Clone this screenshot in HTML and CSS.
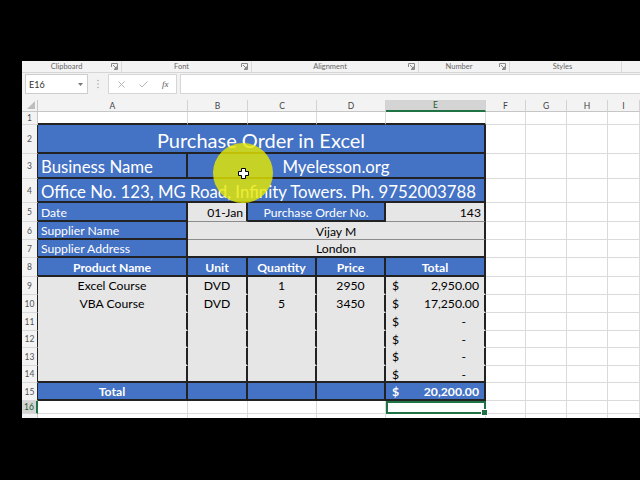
FILE: index.html
```html
<!DOCTYPE html>
<html>
<head>
<meta charset="utf-8">
<link rel="stylesheet" href="styles.css">
</head>
<body>
<div class="screen">
  <div class="ribbon">
    <div class="grp g1"><span class="glabel">Clipboard</span><svg class="launch" width="7" height="7" viewBox="0 0 7 7"><path d="M0.5 4V0.5H6.5V6.5H3" fill="none" stroke="#8a8a8a"/><path d="M2 2L5.5 5.5M5.5 3.5V5.5H3.5" fill="none" stroke="#8a8a8a"/></svg></div>
    <div class="grp g2"><span class="glabel">Font</span><svg class="launch" width="7" height="7" viewBox="0 0 7 7"><path d="M0.5 4V0.5H6.5V6.5H3" fill="none" stroke="#8a8a8a"/><path d="M2 2L5.5 5.5M5.5 3.5V5.5H3.5" fill="none" stroke="#8a8a8a"/></svg></div>
    <div class="grp g3"><span class="glabel">Alignment</span><svg class="launch" width="7" height="7" viewBox="0 0 7 7"><path d="M0.5 4V0.5H6.5V6.5H3" fill="none" stroke="#8a8a8a"/><path d="M2 2L5.5 5.5M5.5 3.5V5.5H3.5" fill="none" stroke="#8a8a8a"/></svg></div>
    <div class="grp g4"><span class="glabel">Number</span><svg class="launch" width="7" height="7" viewBox="0 0 7 7"><path d="M0.5 4V0.5H6.5V6.5H3" fill="none" stroke="#8a8a8a"/><path d="M2 2L5.5 5.5M5.5 3.5V5.5H3.5" fill="none" stroke="#8a8a8a"/></svg></div>
    <div class="grp g5"><span class="glabel">Styles</span></div>
    <div class="grp g6"></div>
  </div>

  <div class="fbar">
    <div class="namebox"><span>E16</span><svg width="5" height="3" viewBox="0 0 5 3"><path d="M0 0H5L2.5 3Z" fill="#777"/></svg></div>
    <div class="dots"><svg width="2" height="10" viewBox="0 0 2 10"><circle cx="1" cy="1.5" r="0.8" fill="#aaa"/><circle cx="1" cy="5" r="0.8" fill="#aaa"/><circle cx="1" cy="8.5" r="0.8" fill="#aaa"/></svg></div>
    <div class="fxbox">
      <svg width="7" height="7" viewBox="0 0 7 7"><path d="M0.5 0.5L6.5 6.5M6.5 0.5L0.5 6.5" stroke="#b5b5b5" stroke-width="1"/></svg>
      <svg width="9" height="7" viewBox="0 0 9 7"><path d="M0.5 3.5L3 6L8.5 0.5" fill="none" stroke="#b5b5b5" stroke-width="1"/></svg>
      <span class="fx">fx</span>
    </div>
    <div class="finput"></div>
  </div>

  <div class="sheet">
    <!-- header row -->
    <div class="c corner"><svg width="8" height="8" viewBox="0 0 8 8"><path d="M8 0V8H0Z" fill="#bdbdbd"/></svg></div>
    <div class="c hd">A</div><div class="c hd">B</div><div class="c hd">C</div><div class="c hd">D</div>
    <div class="c hd on">E</div><div class="c hd">F</div><div class="c hd">G</div><div class="c hd">H</div><div class="c hd">I</div>

    <!-- row 1 -->
    <div class="c rh">1</div>
    <div class="c tb"></div><div class="c tb"></div><div class="c tb"></div><div class="c tb"></div><div class="c tb"></div>
    <div class="c"></div><div class="c"></div><div class="c"></div><div class="c"></div>

    <!-- row 2 -->
    <div class="c rh edge">2</div>
    <div class="c f blue s5 ctr title">Purchase Order in Excel</div>
    <div class="c"></div><div class="c"></div><div class="c"></div><div class="c"></div>

    <!-- row 3 -->
    <div class="c rh edge">3</div>
    <div class="c f blue big">Business Name</div>
    <div class="c f blue s4 ctr big">Myelesson.org</div>
    <div class="c"></div><div class="c"></div><div class="c"></div><div class="c"></div>

    <!-- row 4 -->
    <div class="c rh edge">4</div>
    <div class="c f blue s5 big">Office No. 123, MG Road, Infinity Towers. Ph. 9752003788</div>
    <div class="c"></div><div class="c"></div><div class="c"></div><div class="c"></div>

    <!-- row 5 -->
    <div class="c rh edge">5</div>
    <div class="c f blue">Date</div>
    <div class="c f grey rt lb">01-Jan</div>
    <div class="c f blue s2 ctr">Purchase Order No.</div>
    <div class="c f grey rt lb">143</div>
    <div class="c"></div><div class="c"></div><div class="c"></div><div class="c"></div>

    <!-- row 6 -->
    <div class="c rh edge">6</div>
    <div class="c f blue">Supplier Name</div>
    <div class="c f grey s4 ctr lb">Vijay M</div>
    <div class="c"></div><div class="c"></div><div class="c"></div><div class="c"></div>

    <!-- row 7 -->
    <div class="c rh edge">7</div>
    <div class="c f blue">Supplier Address</div>
    <div class="c f grey s4 ctr">London</div>
    <div class="c"></div><div class="c"></div><div class="c"></div><div class="c"></div>

    <!-- row 8 -->
    <div class="c rh edge">8</div>
    <div class="c f blue ctr b">Product Name</div>
    <div class="c f blue ctr b">Unit</div>
    <div class="c f blue ctr b">Quantity</div>
    <div class="c f blue ctr b">Price</div>
    <div class="c f blue ctr b">Total</div>
    <div class="c"></div><div class="c"></div><div class="c"></div><div class="c"></div>

    <!-- row 9 -->
    <div class="c rh edge">9</div>
    <div class="c f grey nb ctr">Excel Course</div>
    <div class="c f grey nb ctr">DVD</div>
    <div class="c f grey nb ctr">1</div>
    <div class="c f grey nb ctr">2950</div>
    <div class="c f grey nb acc"><span>$</span><span>2,950.00</span></div>
    <div class="c"></div><div class="c"></div><div class="c"></div><div class="c"></div>

    <!-- row 10 -->
    <div class="c rh edge">10</div>
    <div class="c f grey nb ctr">VBA Course</div>
    <div class="c f grey nb ctr">DVD</div>
    <div class="c f grey nb ctr">5</div>
    <div class="c f grey nb ctr">3450</div>
    <div class="c f grey nb acc"><span>$</span><span>17,250.00</span></div>
    <div class="c"></div><div class="c"></div><div class="c"></div><div class="c"></div>

    <!-- row 11 -->
    <div class="c rh edge">11</div>
    <div class="c f grey nb"></div><div class="c f grey nb"></div><div class="c f grey nb"></div><div class="c f grey nb"></div>
    <div class="c f grey nb acc"><span>$</span><span class="dash">-</span></div>
    <div class="c"></div><div class="c"></div><div class="c"></div><div class="c"></div>

    <!-- row 12 -->
    <div class="c rh edge">12</div>
    <div class="c f grey nb"></div><div class="c f grey nb"></div><div class="c f grey nb"></div><div class="c f grey nb"></div>
    <div class="c f grey nb acc"><span>$</span><span class="dash">-</span></div>
    <div class="c"></div><div class="c"></div><div class="c"></div><div class="c"></div>

    <!-- row 13 -->
    <div class="c rh edge">13</div>
    <div class="c f grey nb"></div><div class="c f grey nb"></div><div class="c f grey nb"></div><div class="c f grey nb"></div>
    <div class="c f grey nb acc"><span>$</span><span class="dash">-</span></div>
    <div class="c"></div><div class="c"></div><div class="c"></div><div class="c"></div>

    <!-- row 14 -->
    <div class="c rh edge">14</div>
    <div class="c f grey"></div><div class="c f grey"></div><div class="c f grey"></div><div class="c f grey"></div>
    <div class="c f grey acc"><span>$</span><span class="dash">-</span></div>
    <div class="c"></div><div class="c"></div><div class="c"></div><div class="c"></div>

    <!-- row 15 -->
    <div class="c rh edge">15</div>
    <div class="c f blue ctr b">Total</div>
    <div class="c f blue"></div><div class="c f blue"></div><div class="c f blue"></div>
    <div class="c f blue acc b"><span>$</span><span>20,200.00</span></div>
    <div class="c"></div><div class="c"></div><div class="c"></div><div class="c"></div>

    <!-- row 16 -->
    <div class="c rh on">16</div>
    <div class="c"></div><div class="c"></div><div class="c"></div><div class="c"></div>
    <div class="c sel"></div>
    <div class="c"></div><div class="c"></div><div class="c"></div><div class="c"></div>

    <!-- row 17 -->
    <div class="c rh">17</div>
    <div class="c"></div><div class="c"></div><div class="c"></div><div class="c"></div><div class="c"></div>
    <div class="c"></div><div class="c"></div><div class="c"></div><div class="c"></div>
  </div>

  <div class="spot"></div>
  <svg class="cursor" width="11" height="11" viewBox="0 0 11 11"><path d="M3.5 0.5H7.5V3.5H10.5V7.5H7.5V10.5H3.5V7.5H0.5V3.5H3.5Z" fill="#fff" stroke="#000" stroke-width="1"/></svg>
</div>
</body>
</html>
```

FILE: styles.css
```css
* { box-sizing: border-box; }

html, body {
  margin: 0;
  background: #000;
}

body {
  width: 640px;
  height: 480px;
  overflow: hidden;
  padding: 61px 0 0 22px;
  font-family: Lato, "Open Sans", "Liberation Sans", sans-serif;
}

.screen {
  position: relative;
  width: 618px;
  height: 357px;
  overflow: hidden;
  background: #fff;
  display: flex;
  flex-direction: column;
}

/* ribbon group labels */
.ribbon {
  height: 12px;
  flex: none;
  display: flex;
  background: #f3f3f3;
  border-bottom: 1px solid #d6d6d6;
}
.grp {
  display: flex;
  align-items: center;
  border-right: 1px solid #dadada;
  height: 11px;
}
.g1 { width: 100px; }
.g2 { width: 130px; }
.g3 { width: 167px; }
.g4 { width: 91px; }
.g5 { width: 112px; }
.g6 { flex: 1; border-right: none; }
.glabel {
  flex: 1;
  text-align: center;
  font-size: 7.5px;
  color: #666;
  line-height: 11px;
}
.launch { flex: none; margin-right: 3px; }
.g5 .glabel { padding-right: 6px; }

/* formula bar */
.fbar {
  height: 27px;
  flex: none;
  display: flex;
  align-items: flex-start;
  padding-top: 1px;
  background: #f2f2f2;
}
.namebox {
  margin-left: 3px;
  width: 63px;
  height: 20px;
  background: #fff;
  border: 1px solid #cdcdcd;
  display: flex;
  align-items: center;
  justify-content: space-between;
  padding: 0 4px 0 3px;
  font-size: 9px;
  color: #333;
}
.dots {
  width: 20px;
  height: 20px;
  display: flex;
  align-items: center;
  justify-content: center;
}
.fxbox {
  width: 69px;
  height: 20px;
  background: #fff;
  border: 1px solid #d6d6d6;
  display: flex;
  align-items: center;
  gap: 14px;
  padding-left: 9px;
}
.fx {
  font-family: "Liberation Serif", serif;
  font-style: italic;
  font-size: 9px;
  color: #555;
}
.finput {
  flex: 1;
  margin-left: 3px;
  height: 20px;
  background: #fff;
  border: 1px solid #d6d6d6;
  border-right: none;
}

/* sheet grid */
.sheet {
  flex: none;
  display: grid;
  grid-template-columns: 16px 150px 60px 69px 69px 100px 40px 41px 41px 1fr;
  grid-template-rows: 12px 13px 29px 25px 24px 19px 18px 18px 19px 18px 18px 18px 17px 18px 17px 18px 13px 18px;
  background: #fff;
}

.c {
  display: flex;
  align-items: center;
  min-width: 0;
  padding: 0 3px;
  white-space: nowrap;
  overflow: hidden;
  font-size: 12.2px;
  color: #000;
  border-right: 1px solid #dadada;
  border-bottom: 1px solid #dadada;
}

.corner {
  background: #f3f3f3;
  border-right-color: #c6c6c6;
  border-bottom-color: #c6c6c6;
  justify-content: flex-end;
  align-items: flex-end;
  padding: 0 2px 2px 0;
}
.hd {
  background: #f3f3f3;
  justify-content: center;
  font-size: 8.5px;
  color: #444;
  border-right-color: #d2d2d2;
  border-bottom-color: #c6c6c6;
}
.hd.on {
  background: #d4d4d4;
  color: #1d5a34;
  border-bottom: 2px solid #217346;
}
.rh {
  background: #f3f3f3;
  justify-content: center;
  padding: 0;
  font-size: 8.5px;
  color: #555;
  border-right-color: #c6c6c6;
  border-bottom-color: #d8d8d8;
}
.rh.edge { border-right: 1px solid #222; }
.rh.on {
  background: #d4d4d4;
  color: #1d5a34;
  border-right: 2px solid #217346;
}

.tb { border-bottom: 2px solid #222; }

.f {
  border-right: 2px solid #222;
  border-bottom: 2px solid #222;
  padding-top: 1px;
}
.blue { background: #4472c4; color: #fff; }
.grey { background: #e7e6e6; color: #000; }
.nb { border-bottom-color: #e7e6e6; }
.lb { border-bottom: 1px solid #8c8c8c; }

.s2 { grid-column: span 2; }
.s4 { grid-column: span 4; }
.s5 { grid-column: span 5; }

.ctr { justify-content: center; }
.rt { justify-content: flex-end; }
.b { font-weight: 700; }
.title { font-size: 20px; padding-top: 2px; }
.big { font-size: 16.8px; padding-top: 2px; }

.acc {
  justify-content: space-between;
  padding: 1px 5px 0 6px;
}
.acc .dash { padding-right: 13px; }

.sel {
  position: relative;
  overflow: visible;
  border: 2px solid #217346;
}
.sel::after {
  content: "";
  position: absolute;
  right: -4px;
  bottom: -4px;
  width: 5px;
  height: 5px;
  background: #217346;
  border: 1px solid #fff;
  z-index: 2;
}

/* presenter highlight + cursor */
.spot {
  position: absolute;
  left: 191px;
  top: 82px;
  width: 60px;
  height: 60px;
  border-radius: 50%;
  background: rgba(232, 234, 0, 0.8);
  filter: blur(0.6px);
}
.cursor {
  position: absolute;
  left: 216px;
  top: 107px;
}
```
